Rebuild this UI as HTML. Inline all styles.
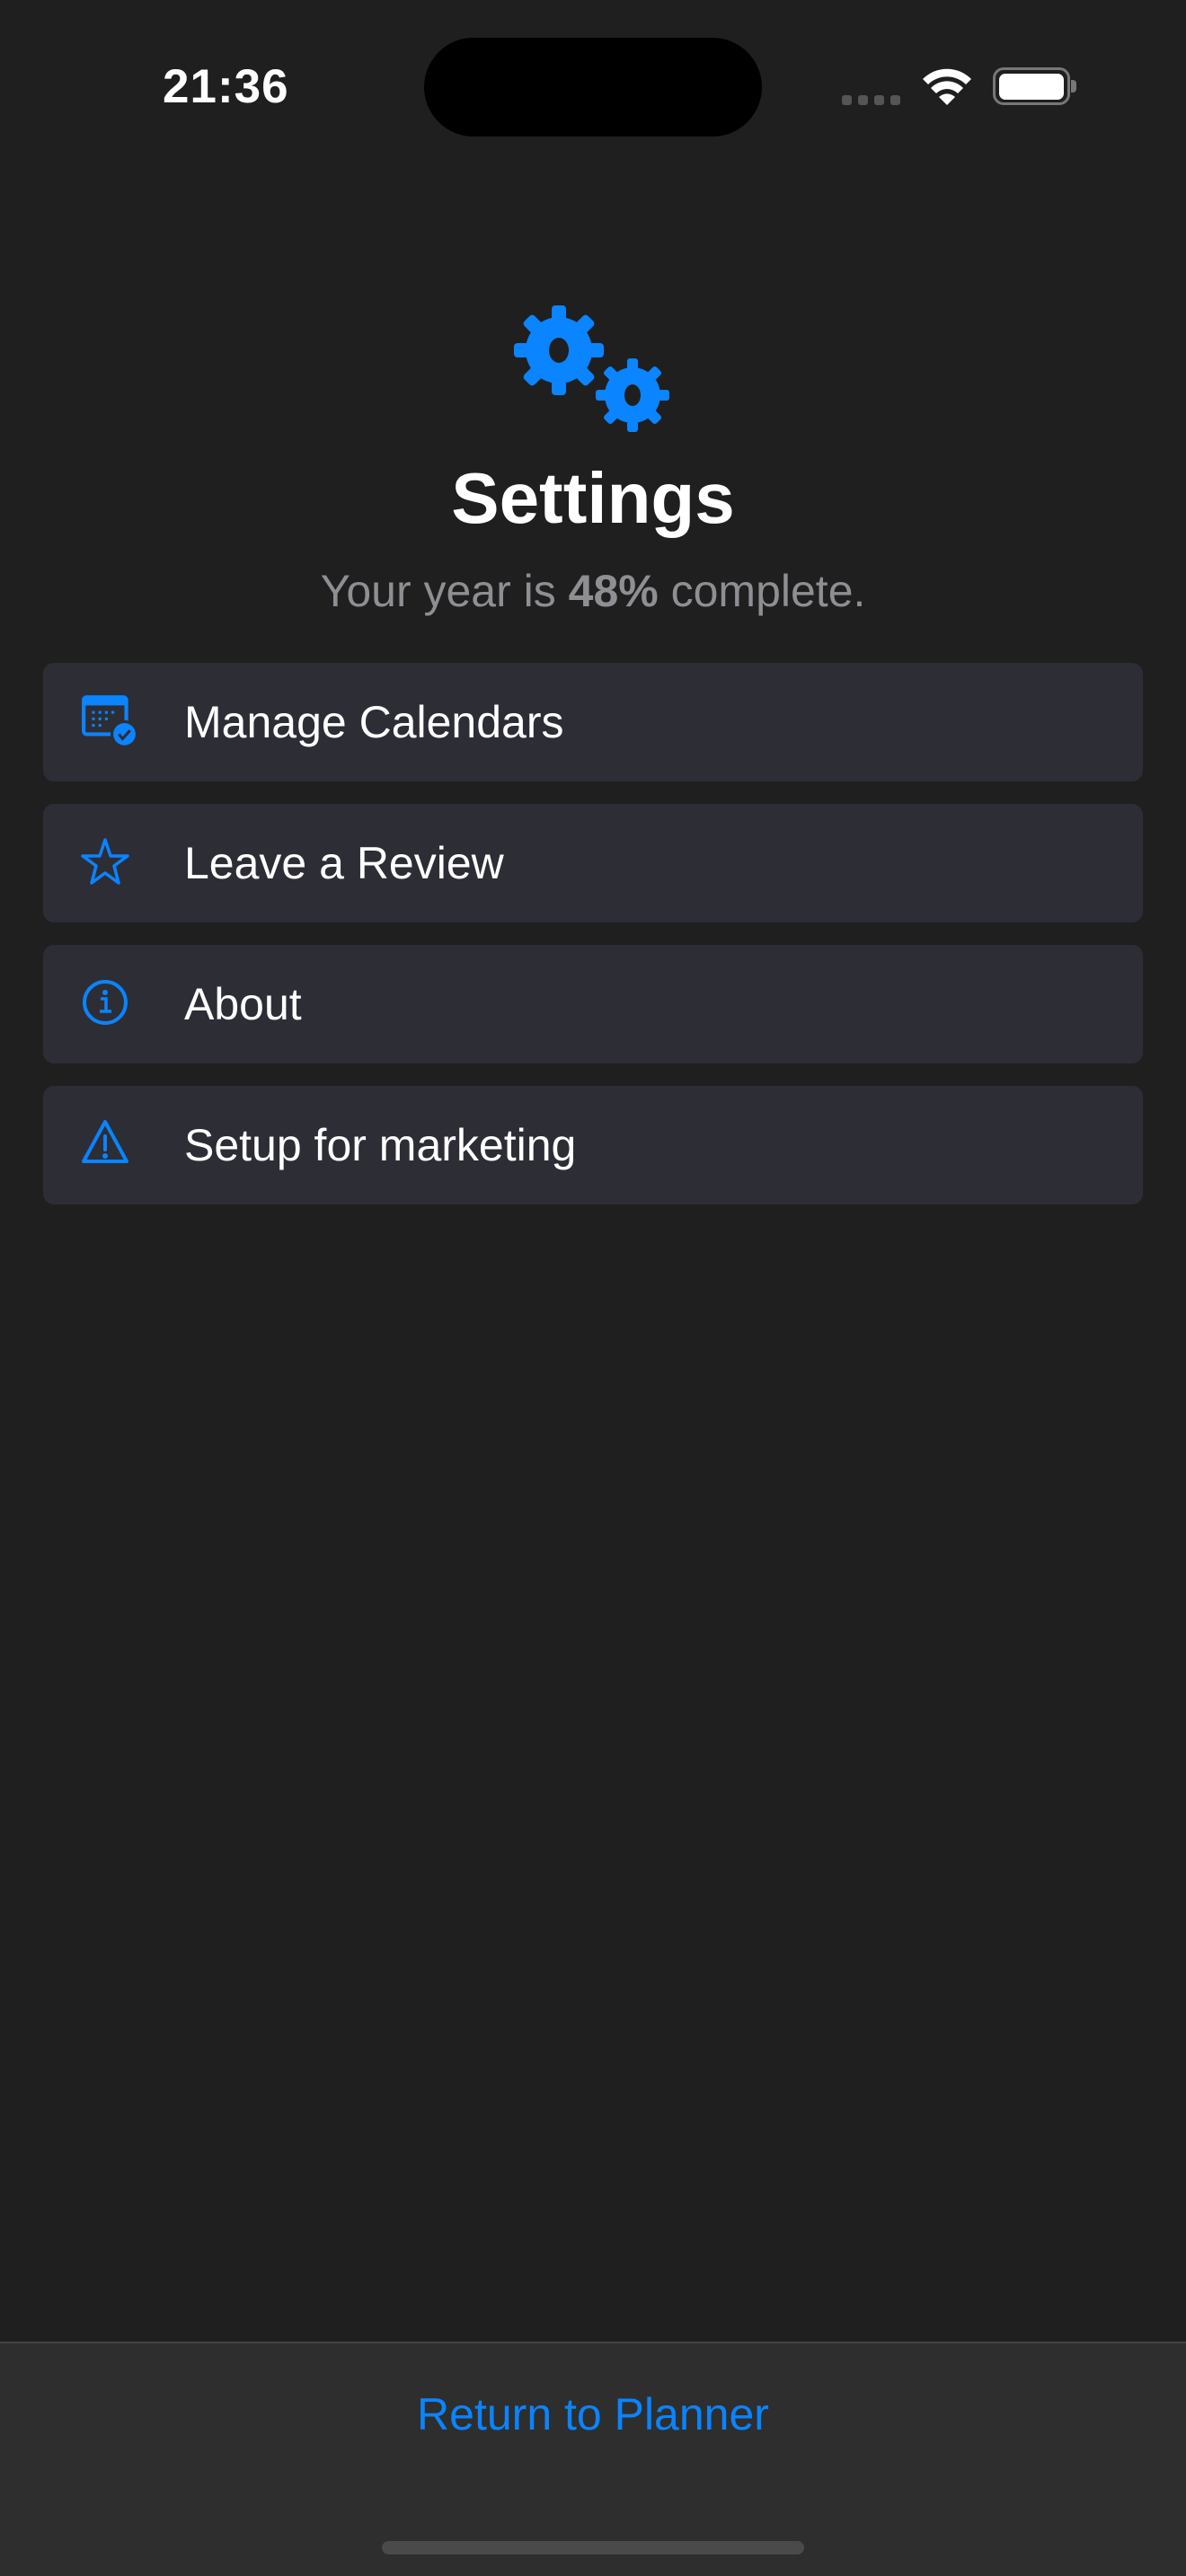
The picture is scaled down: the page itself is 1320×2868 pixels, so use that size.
<!DOCTYPE html>
<html><head><meta charset="utf-8"><style>
*{margin:0;padding:0;box-sizing:border-box}
body{width:1320px;height:2868px;background:#1f1f1f;position:relative;overflow:hidden;font-family:"Liberation Sans",sans-serif;color:#fff}
.abs{position:absolute}
.row{position:absolute;left:48px;width:1224px;height:132px;background:#2d2d36;border-radius:12px}
.row .t{position:absolute;left:157px;top:0;line-height:132px;font-size:50px;color:#fff}
.row svg{position:absolute;left:41px;top:34px}
</style></head><body>
<div class="abs" style="left:181px;top:66px;font-size:53px;font-weight:bold;line-height:62px;letter-spacing:1px">21:36</div>
<div class="abs" style="left:472px;top:42px;width:376px;height:110px;background:#000;border-radius:55px"></div>
<div class="abs" style="left:937px;top:106px;width:11px;height:11px;background:#555;border-radius:3px"></div>
<div class="abs" style="left:955px;top:106px;width:11px;height:11px;background:#555;border-radius:3px"></div>
<div class="abs" style="left:973px;top:106px;width:11px;height:11px;background:#555;border-radius:3px"></div>
<div class="abs" style="left:991px;top:106px;width:11px;height:11px;background:#555;border-radius:3px"></div>
<svg class="abs" style="left:1025px;top:75px" width="58" height="43" viewBox="0 0 58 43">
<path d="M2 13 A38 38 0 0 1 56 13 L50 19 A30 30 0 0 0 8 19Z" fill="#fff"/>
<path d="M11 23 A25 25 0 0 1 47 23 L41 29 A17 17 0 0 0 17 29Z" fill="#fff"/>
<path d="M20 33 A13 13 0 0 1 38 33 L29 42Z" fill="#fff"/>
</svg>
<div class="abs" style="left:1105px;top:75px;width:86px;height:42px;border:3px solid #777;border-radius:12px"></div>
<div class="abs" style="left:1112px;top:82px;width:72px;height:29px;background:#fff;border-radius:7px"></div>
<div class="abs" style="left:1192px;top:89px;width:6px;height:14px;background:#777;border-radius:0 4px 4px 0"></div>

<svg class="abs" style="left:570px;top:340px" width="182" height="142" viewBox="0 0 182 142">
<g fill="#0a84ff">
<g transform="translate(52,50)">
<circle r="37"/>
<g id="t1"><rect x="-8" y="-50" width="16" height="20" rx="4"/></g>
<use href="#t1" transform="rotate(45)"/><use href="#t1" transform="rotate(90)"/><use href="#t1" transform="rotate(135)"/><use href="#t1" transform="rotate(180)"/><use href="#t1" transform="rotate(225)"/><use href="#t1" transform="rotate(270)"/><use href="#t1" transform="rotate(315)"/>
<ellipse rx="11" ry="14" fill="#1f1f1f"/>
</g>
<g transform="translate(134,100)">
<circle r="31"/>
<g id="t2"><rect x="-6" y="-41" width="12" height="17" rx="3"/></g>
<use href="#t2" transform="rotate(45)"/><use href="#t2" transform="rotate(90)"/><use href="#t2" transform="rotate(135)"/><use href="#t2" transform="rotate(180)"/><use href="#t2" transform="rotate(225)"/><use href="#t2" transform="rotate(270)"/><use href="#t2" transform="rotate(315)"/>
<ellipse rx="9" ry="12" fill="#1f1f1f"/>
</g></g></svg>
<div class="abs" style="left:0;width:1320px;top:505px;text-align:center;font-size:80px;font-weight:bold;line-height:100px">Settings</div>
<div class="abs" style="left:0;width:1320px;top:628px;text-align:center;font-size:50px;color:#8e8e93;line-height:60px">Your year is <b>48%</b> complete.</div>

<div class="row" style="top:738px"><svg width="66" height="66" viewBox="0 0 64 64"><rect x="4" y="4" width="46" height="40" rx="3" fill="none" stroke="#0a84ff" stroke-width="4"/><rect x="4" y="4" width="46" height="9" fill="#0a84ff"/><g fill="#0a84ff"><rect x="13" y="19" width="3" height="3"/><rect x="20" y="19" width="3" height="3"/><rect x="27" y="19" width="3" height="3"/><rect x="34" y="19" width="3" height="3"/><rect x="13" y="26" width="3" height="3"/><rect x="20" y="26" width="3" height="3"/><rect x="27" y="26" width="3" height="3"/><rect x="13" y="33" width="3" height="3"/><rect x="20" y="33" width="3" height="3"/></g><circle cx="48" cy="44" r="15" fill="#2d2d36"/><circle cx="48" cy="44" r="12" fill="#0a84ff"/><path d="M42 44 l4 5 l8 -9" fill="none" stroke="#2d2d36" stroke-width="3"/></svg><div class="t">Manage Calendars</div></div>
<div class="row" style="top:895px"><svg width="64" height="64" viewBox="0 0 64 64"><path d="M28 6 L34 24 L53 24 L38 35 L43 54 L28 43 L13 54 L18 35 L3 24 L22 24Z" fill="none" stroke="#0a84ff" stroke-width="3.5" stroke-linejoin="round"/></svg><div class="t">Leave a Review</div></div>
<div class="row" style="top:1052px"><svg width="64" height="64" viewBox="0 0 64 64"><circle cx="28" cy="30" r="23" fill="none" stroke="#0a84ff" stroke-width="4"/><circle cx="28" cy="19" r="3" fill="#0a84ff"/><path d="M23 26 h6 v14 M22 40 h13" fill="none" stroke="#0a84ff" stroke-width="3.5"/></svg><div class="t">About</div></div>
<div class="row" style="top:1209px"><svg width="64" height="64" viewBox="0 0 64 64"><path d="M28 6 L52 50 H4 Z" fill="none" stroke="#0a84ff" stroke-width="4" stroke-linejoin="round"/><path d="M28 22 v15" stroke="#0a84ff" stroke-width="4" stroke-linecap="round"/><circle cx="28" cy="44" r="3" fill="#0a84ff"/></svg><div class="t">Setup for marketing</div></div>

<div class="abs" style="left:0;top:2607px;width:1320px;height:261px;background:#2e2e2e;border-top:2px solid #444"></div>
<div class="abs" style="left:0;width:1320px;top:2658px;text-align:center;font-size:50px;color:#0a84ff;line-height:60px">Return to Planner</div>
<div class="abs" style="left:425px;top:2829px;width:470px;height:15px;background:#4a4a4a;border-radius:8px"></div>
</body></html>
